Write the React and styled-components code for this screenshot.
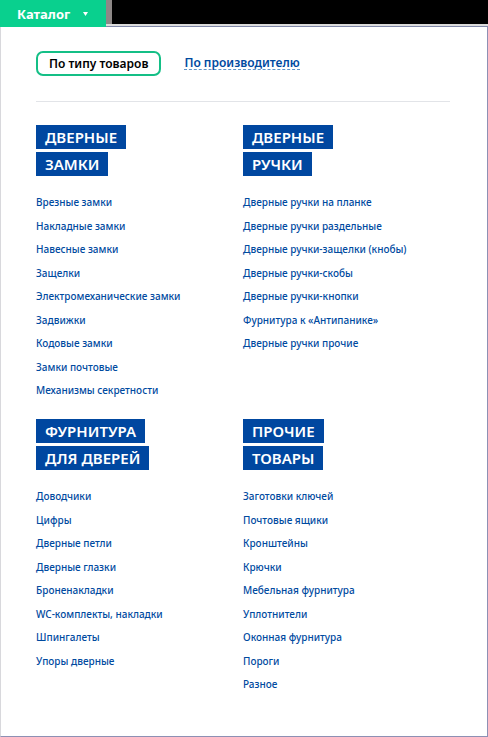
import React from 'react';
import styled, { createGlobalStyle } from 'styled-components';

const Global = createGlobalStyle`
  * { box-sizing: border-box; }
  body {
    margin: 0;
    background: #fff;
    font-family: "Noto Sans", "Open Sans", sans-serif;
    color: #004a9f;
  }
`;
const Page = styled.div`
  min-height: 100vh;
  display: flex;
  flex-direction: column;
`;
const TopBar = styled.header`
  display: flex;
  background: #000;
`;
const CatalogButton = styled.button`
  display: flex;
  align-items: center;
  gap: 13px;
  height: 27px;
  padding: 0 18px 0 17px;
  border: 0;
  background: #09d08e;
  color: #fff;
  font: 700 13px/20px "Noto Sans", sans-serif;
`;
const BarRest = styled.div`
  flex: 1;
  display: flex;
  padding-bottom: 2px;
  border-bottom: 1px solid #8088a8;
  box-shadow: inset 0 -2px #dcdcdc;
`;
const BarEdge = styled.div`
  width: 6px;
  background: #8d8887;
`;
const Panel = styled.main`
  flex: 1;
  padding: 24px 37px 40px 35px;
  border: 1px solid #8d90b4;
  border-top: 0;
  border-left-color: #d8d8dc;
`;
const Tabs = styled.nav`
  display: flex;
  align-items: center;
  gap: 23px;
  padding-bottom: 25px;
  border-bottom: 1px solid #e2e4e8;
`;
const ActiveTab = styled.button`
  height: 25px;
  padding: 0 11px;
  border: 2px solid #14bf86;
  border-radius: 7px;
  background: #fff;
  color: #000;
  font: 600 12px/20px "Noto Sans", sans-serif;
`;
const TabLink = styled.a`
  border-bottom: 1px dashed #5f94c8;
  color: #004a9f;
  font-size: 12px;
  font-weight: 600;
  line-height: 12px;
  text-decoration: none;
`;
const Grid = styled.div`
  display: grid;
  grid-template-columns: 1fr 1fr;
  row-gap: 17px;
  padding-top: 23px;
`;
const Heading = styled.h2`
  display: flex;
  flex-direction: column;
  align-items: flex-start;
  gap: 3px;
  margin: 0 0 15px;
  font-size: 15px;
  font-weight: 600;
  line-height: 24px;
`;
const HeadingLine = styled.span`
  padding: 0 9px;
  background: #0047a0;
  color: #fff;
`;
const List = styled.ul`
  margin: 0;
  padding: 0;
  list-style: none;
`;
const Item = styled.li`
  font-size: 10px;
  font-weight: 500;
  line-height: 23px;

  &:nth-child(even) {
    line-height: 24px;
  }
`;
const Link = styled.a`
  color: #004a9f;
  text-decoration: none;
`;

const sections = [
  {
    title: ['ДВЕРНЫЕ', 'ЗАМКИ'],
    items: ['Врезные замки', 'Накладные замки', 'Навесные замки', 'Защелки', 'Электромеханические замки', 'Задвижки', 'Кодовые замки', 'Замки почтовые', 'Механизмы секретности'],
  },
  {
    title: ['ДВЕРНЫЕ', 'РУЧКИ'],
    items: ['Дверные ручки на планке', 'Дверные ручки раздельные', 'Дверные ручки-защелки (кнобы)', 'Дверные ручки-скобы', 'Дверные ручки-кнопки', 'Фурнитура к «Антипанике»', 'Дверные ручки прочие'],
  },
  {
    title: ['ФУРНИТУРА', 'ДЛЯ ДВЕРЕЙ'],
    items: ['Доводчики', 'Цифры', 'Дверные петли', 'Дверные глазки', 'Броненакладки', 'WC-комплекты, накладки', 'Шпингалеты', 'Упоры дверные'],
  },
  {
    title: ['ПРОЧИЕ', 'ТОВАРЫ'],
    items: ['Заготовки ключей', 'Почтовые ящики', 'Кронштейны', 'Крючки', 'Мебельная фурнитура', 'Уплотнители', 'Оконная фурнитура', 'Пороги', 'Разное'],
  },
];

export default function App() {
  return (
    <Page>
      <Global />
      <TopBar>
        <CatalogButton type="button">
          Каталог
          <svg width="5" height="4" viewBox="0 0 5 4" aria-hidden="true">
            <path d="M0 0h5L2.5 4z" fill="#fff" />
          </svg>
        </CatalogButton>
        <BarRest><BarEdge /></BarRest>
      </TopBar>
      <Panel>
        <Tabs>
          <ActiveTab type="button">По типу товаров</ActiveTab>
          <TabLink href="#makers">По производителю</TabLink>
        </Tabs>
        <Grid>
          {sections.map((section) => (
            <section key={section.title.join(' ')}>
              <Heading>
                {section.title.map((line) => <HeadingLine key={line}>{line}</HeadingLine>)}
              </Heading>
              <List>
                {section.items.map((item) => (
                  <Item key={item}><Link href="#catalog">{item}</Link></Item>
                ))}
              </List>
            </section>
          ))}
        </Grid>
      </Panel>
    </Page>
  );
}
